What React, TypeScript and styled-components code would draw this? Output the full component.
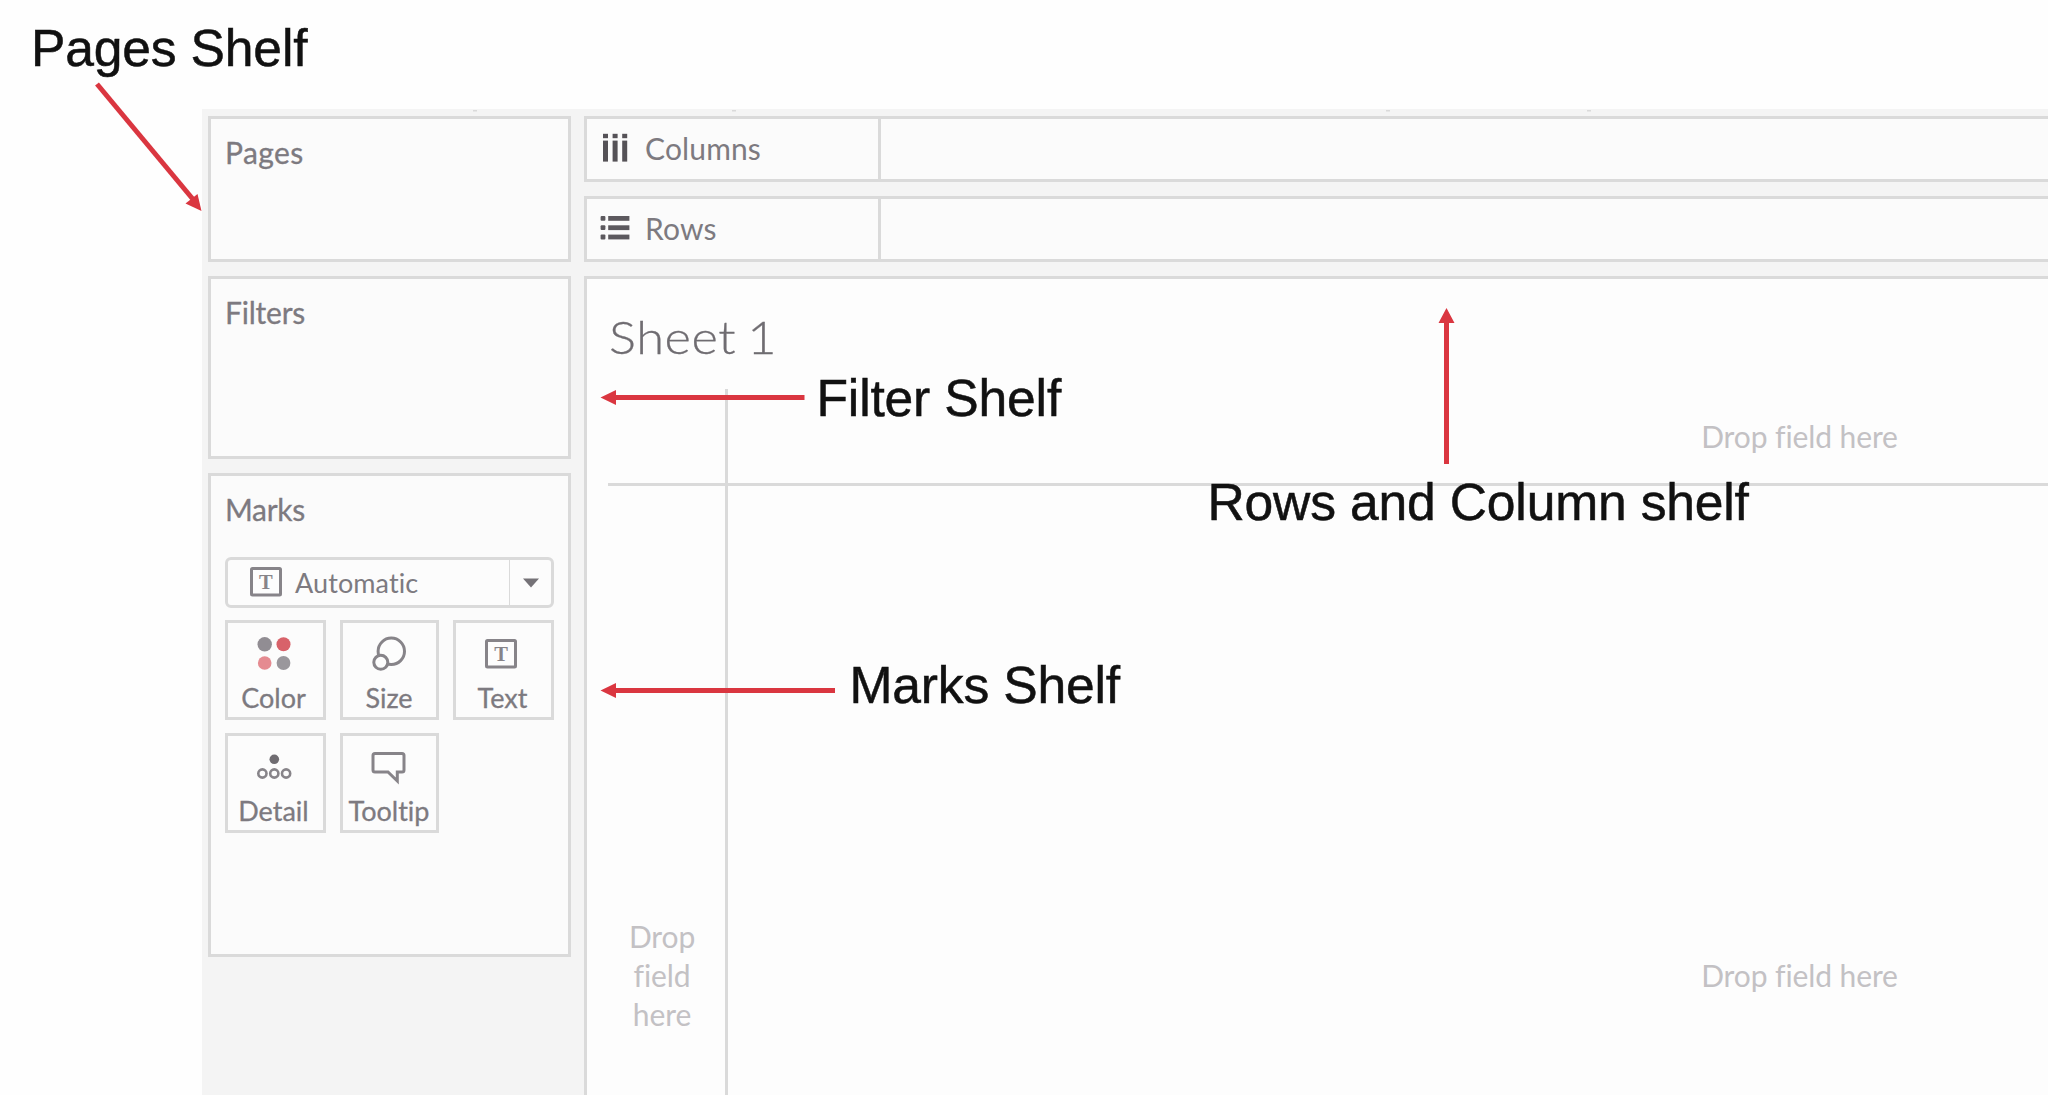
import React from 'react';
import styled, { createGlobalStyle } from 'styled-components';

const line = '#dadada';
const ink = '#878489';
const label = '#7d7a80';
const surface = '#fbfbfb';
const red = '#da3640';

const GlobalStyle = createGlobalStyle`
  * { box-sizing: border-box; }
  body { margin: 0; background: #fefefe; overflow: hidden; }
`;

const Page = styled.div`
  position: relative;
  width: 2048px;
  height: 1095px;
  padding: 109px 0 0 202px;
  overflow: hidden;
  background: #fefefe;
  color: ${label};
  font-family: Lato, 'Noto Sans', sans-serif;
  font-variant-ligatures: none;
`;

const Workspace = styled.div`
  display: flex;
  gap: 13px;
  height: 986px;
  padding: 7px 0 0 6px;
  background: #f4f4f4;
`;

const Sidebar = styled.div`
  display: flex;
  flex-direction: column;
  gap: 14px;
  width: 363px;
  flex: none;
`;

const Panel = styled.section<{ $height: number }>`
  height: ${(p) => p.$height}px;
  flex: none;
  padding: 15px 14px 0;
  border: 3px solid ${line};
  background: ${surface};
`;

const PanelTitle = styled.div<{ $tracking?: number }>`
  font-size: 30px;
  line-height: 36px;
  letter-spacing: ${(p) => p.$tracking ?? 0}px;
  -webkit-text-stroke: 0.3px ${label};
`;

const MarkSelect = styled.div`
  display: flex;
  width: 329px;
  height: 51px;
  margin: 30px 0 12px;
  border: 3px solid ${line};
  border-radius: 6px;
  background: #fcfcfc;
`;

const MarkValue = styled.div`
  display: flex;
  align-items: center;
  gap: 11px;
  flex: 1;
  padding: 0 0 1px 20px;
  font-size: 27px;
  line-height: 33px;
  letter-spacing: 0.1px;
`;

const MarkCaret = styled.div`
  display: flex;
  align-items: center;
  justify-content: center;
  width: 42px;
  border-left: 1px solid ${line};
`;

const MarkGrid = styled.div`
  display: grid;
  grid-template-columns: 101px 99px 101px;
  grid-auto-rows: 100px;
  gap: 13px 14px;
`;

const MarkButton = styled.div<{ $nudge?: number }>`
  display: flex;
  flex-direction: column;
  align-items: center;
  gap: 9px;
  padding: 13px ${(p) => p.$nudge ?? 0}px 0 0;
  border: 3px solid ${line};
  background: #fcfcfc;
  font-size: 27px;
  line-height: 33px;
  white-space: nowrap;
  -webkit-text-stroke: 0.3px ${label};
`;

const Main = styled.div`
  display: flex;
  flex-direction: column;
  gap: 14px;
  flex: 1;
  min-width: 0;
`;

const Shelf = styled.div`
  display: flex;
  height: 66px;
  flex: none;
  border: 3px solid ${line};
  border-right: 0;
  background: ${surface};
`;

const ShelfLabel = styled.div`
  display: flex;
  align-items: center;
  gap: 15px;
  width: 294px;
  padding: 0 0 3px 13px;
  border-right: 3px solid ${line};
  font-size: 30px;
  line-height: 36px;
  letter-spacing: 0.15px;
`;

const Sheet = styled.div`
  flex: 1;
  min-height: 0;
  padding: 30px 0 0 21px;
  overflow: hidden;
  border: solid ${line};
  border-width: 3px 0 0 3px;
  background: #fdfdfd;
`;

const SheetTitle = styled.div`
  width: 300px;
  margin-bottom: 25px;
  padding-left: 1px;
  transform: scaleX(1.1);
  transform-origin: left;
  font-size: 46px;
  font-weight: 300;
  line-height: 55px;
  letter-spacing: 0.5px;
  word-spacing: -3px;
  color: #6f6c71;
  -webkit-text-stroke: 0.3px #6f6c71;
`;

const DropGrid = styled.div`
  display: grid;
  grid-template-columns: 120px 2143px;
  grid-template-rows: 97px 979px;
  width: 2263px;
`;

const DropCell = styled.div<{ $right?: boolean; $bottom?: boolean; $padRight?: number }>`
  display: flex;
  align-items: center;
  justify-content: center;
  padding-right: ${(p) => p.$padRight ?? 0}px;
  border: 0 solid ${line};
  border-right-width: ${(p) => (p.$right ? 3 : 0)}px;
  border-bottom-width: ${(p) => (p.$bottom ? 3 : 0)}px;
  font-size: 30px;
  line-height: 39px;
  letter-spacing: -0.1px;
  text-align: center;
  color: #c3c1c4;
`;

const Note = styled.div<{ $x: number; $y: number }>`
  position: absolute;
  left: ${(p) => p.$x}px;
  top: ${(p) => p.$y}px;
  font-family: 'Liberation Sans', Arial, sans-serif;
  font-size: 51.6px;
  line-height: 60px;
  letter-spacing: -0.17px;
  white-space: nowrap;
  color: #111;
  -webkit-text-stroke: 0.5px #111;
`;

const Arrows = styled.svg`
  position: absolute;
  left: 0;
  top: 0;
`;

const TextBox = ({ dx = 0 }: { dx?: number }) => (
  <svg width="36" height="36" viewBox="0 0 36 36">
    <g transform={`translate(${dx} 0)`}>
      <rect x="3.5" y="4.5" width="29" height="26.5" rx="1" fill="#fdfdfd" stroke={ink} strokeWidth="3" />
      <text x="18" y="24.6" textAnchor="middle" fontFamily="Liberation Serif, serif" fontWeight="700" fontSize="20.5" fill={ink} stroke="none">
        T
      </text>
    </g>
  </svg>
);

const ColorIcon = () => (
  <svg width="36" height="36" viewBox="0 0 36 36">
    <circle cx="8.7" cy="8.3" r="7.2" fill="#918d93" />
    <circle cx="27.5" cy="8.3" r="7" fill="#d8626a" />
    <circle cx="8.7" cy="27" r="6.8" fill="#e58b91" />
    <circle cx="27.5" cy="27" r="6.9" fill="#9a979c" />
  </svg>
);

const SizeIcon = () => (
  <svg width="36" height="36" viewBox="0 0 36 36">
    <circle cx="20.3" cy="15.3" r="13.2" fill="#fdfdfd" stroke={ink} strokeWidth="3" />
    <circle cx="9.8" cy="26.3" r="7" fill="#fdfdfd" stroke={ink} strokeWidth="3" />
  </svg>
);

const DetailIcon = () => (
  <svg width="36" height="36" viewBox="0 0 36 36">
    <circle cx="18.3" cy="10.3" r="4.8" fill="#6f6c71" />
    {[6.4, 18.3, 30.1].map((x) => (
      <circle key={x} cx={x} cy="24.5" r="4.1" fill="none" stroke={ink} strokeWidth="2.6" />
    ))}
  </svg>
);

const TooltipIcon = () => (
  <svg width="36" height="36" viewBox="0 0 36 36">
    <path
      d="M4 4.5 H31 Q33 4.5 33 6.5 V21 Q33 23 31 23 H26.3 V32 L17 23 H4 Q2 23 2 21 V6.5 Q2 4.5 4 4.5 Z"
      fill="#fdfdfd"
      stroke={ink}
      strokeWidth="3"
    />
  </svg>
);

const ColumnsIcon = () => (
  <svg width="30" height="30" viewBox="0 0 30 30" fill="#555257">
    {[3, 12.6, 22.2].map((x) => (
      <g key={x}>
        <rect x={x} y="0.8" width="5" height="4.4" />
        <rect x={x} y="7.6" width="5" height="21" />
      </g>
    ))}
  </svg>
);

const RowsIcon = () => (
  <svg width="30" height="30" viewBox="0 0 30 30" fill="#5c595e">
    {[3, 12.3, 21.6].map((y) => (
      <g key={y}>
        <rect x="0.6" y={y} width="4.8" height="4.8" rx="1" />
        <rect x="8.2" y={y} width="21.2" height="4.8" />
      </g>
    ))}
  </svg>
);

const marks = [
  { label: 'Color', icon: <ColorIcon />, nudge: 4 },
  { label: 'Size', icon: <SizeIcon />, nudge: 1 },
  { label: 'Text', icon: <TextBox dx={-2} />, nudge: 2 },
  { label: 'Detail', icon: <DetailIcon />, nudge: 4 },
  { label: 'Tooltip', icon: <TooltipIcon />, nudge: 1 },
];

export default function App() {
  return (
    <Page>
      <GlobalStyle />
      <Workspace>
        <Sidebar>
          <Panel $height={146}>
            <PanelTitle $tracking={0.4}>Pages</PanelTitle>
          </Panel>
          <Panel $height={183}>
            <PanelTitle $tracking={-0.2}>Filters</PanelTitle>
          </Panel>
          <Panel $height={484}>
            <PanelTitle $tracking={-0.3}>Marks</PanelTitle>
            <MarkSelect>
              <MarkValue>
                <TextBox />
                Automatic
              </MarkValue>
              <MarkCaret>
                <svg width="18" height="10" viewBox="0 0 18 10">
                  <path d="M1 0.5 H17 L9 9.5 Z" fill="#757277" />
                </svg>
              </MarkCaret>
            </MarkSelect>
            <MarkGrid>
              {marks.map((m) => (
                <MarkButton key={m.label} $nudge={m.nudge}>
                  {m.icon}
                  {m.label}
                </MarkButton>
              ))}
            </MarkGrid>
          </Panel>
        </Sidebar>
        <Main>
          <Shelf>
            <ShelfLabel>
              <ColumnsIcon />
              Columns
            </ShelfLabel>
          </Shelf>
          <Shelf>
            <ShelfLabel>
              <RowsIcon />
              Rows
            </ShelfLabel>
          </Shelf>
          <Sheet>
            <SheetTitle>Sheet 1</SheetTitle>
            <DropGrid>
              <DropCell $right $bottom />
              <DropCell $bottom>Drop field here</DropCell>
              <DropCell $right $padRight={9}>
                Drop
                <br />
                field
                <br />
                here
              </DropCell>
              <DropCell>Drop field here</DropCell>
            </DropGrid>
          </Sheet>
        </Main>
      </Workspace>
      <Arrows width="2048" height="1095" viewBox="0 0 2048 1095" fill={red}>
        <g fill={line}>
          {[473, 732, 1386, 1587].map((x) => (
            <rect key={x} x={x} y="110" width="4" height="1.5" />
          ))}
        </g>
        <path d="M97 84 L194 200.5" stroke={red} strokeWidth="5" />
        <path d="M201.5 211 L185.5 203.5 L197.5 194 Z" />
        <path d="M600.5 397.5 L616 390 V395 H804.5 V400 H616 V405 Z" />
        <path d="M600.5 690.5 L616 683 V688 H835 V693 H616 V698 Z" />
        <path d="M1446.5 308 L1454.5 323 H1449 V464 H1444 V323 H1438.5 Z" />
      </Arrows>
      <Note $x={31} $y={18}>Pages Shelf</Note>
      <Note $x={816.5} $y={368}>Filter Shelf</Note>
      <Note $x={849.5} $y={655}>Marks Shelf</Note>
      <Note $x={1207.5} $y={472}>Rows and Column shelf</Note>
    </Page>
  );
}
